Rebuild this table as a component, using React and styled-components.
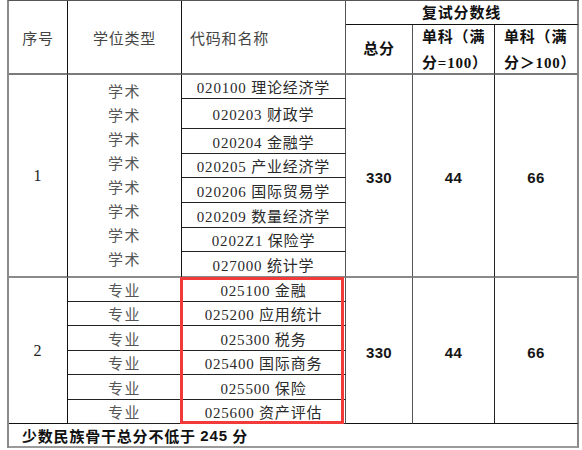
import React from 'react';
import styled, { createGlobalStyle } from 'styled-components';

const GlobalStyle = createGlobalStyle`
  html, body {
    margin: 0;
    padding: 0;
    background: #ffffff;
  }
  body {
    font-family: "Liberation Serif", "Noto Sans CJK SC", serif;
    color: #333;
  }
`;

// bordas verticais de cada coluna (pela coluna onde a célula termina)
const RIGHT = {
  1: '1px solid #111',
  2: '1px solid #111',
  3: '1px solid #555',
  4: '1px solid #555',
  5: '1px solid #222',
  6: '2px solid #8a8a8a',
};

const Table = styled.div`
  display: grid;
  grid-template-columns: 59px 114px 164px 67px 82px 84px;
  grid-template-rows: 24px 50px 24px 30px 25px 24px 25px 25px 24px 26px 24px 24px 25px 24px 25px 24px 24px;
  margin-left: 7px;
  width: max-content;
  border-top: 1px solid #555;
  border-left: 2px solid #8a8a8a;
  box-shadow: 0 1px 0 #dcdcdc;
`;

const Cell = styled.div`
  box-sizing: border-box;
  grid-column: ${p => p.$col};
  grid-row: ${p => p.$row};
  border-right: ${p => RIGHT[p.$end]};
  border-bottom: ${p => p.$bottom || '1px solid #222'};
  display: flex;
  align-items: center;
  justify-content: center;
  font-size: 15px;
  letter-spacing: 0.8px;
  white-space: nowrap;
`;

const HeadCell = styled(Cell)`
  color: #444;
  justify-content: ${p => (p.$left ? 'flex-start' : 'center')};
  padding-left: ${p => (p.$left ? '8px' : '0')};
`;

const BoldHead = styled(Cell)`
  font-weight: 700;
  color: #111;
  line-height: 26px;
  justify-content: ${p => (p.$left ? 'flex-start' : 'center')};
  padding-left: ${p => (p.$left ? '9px' : '0')};
  padding-top: ${p => (p.$left ? '2px' : '0')};
`;

const SeqCell = styled(Cell)`
  font-size: 16px;
  color: #222;
`;

const TypeStack = styled(Cell)`
  flex-direction: column;
  color: #555;
  line-height: 24px;
  letter-spacing: 1.5px;
  padding-top: 1px;
`;

const TypeCell = styled(Cell)`
  color: #555;
  letter-spacing: 1.5px;
`;

const MajorCell = styled(Cell)`
  color: #2a2a2a;
`;

const ScoreCell = styled(Cell)`
  font-family: "Liberation Sans", "Noto Sans CJK SC", sans-serif;
  font-weight: 700;
  font-size: 15px;
  letter-spacing: 0.3px;
  color: #151515;
  padding-top: 3px;
`;

const FooterCell = styled(Cell)`
  justify-content: flex-start;
  padding-left: 13px;
  font-weight: 700;
  color: #111;
  letter-spacing: 0.8px;
`;

const Num = styled.span`
  font-family: "Liberation Sans", sans-serif;
`;

// moldura vermelha sobre os cursos profissionais
const Highlight = styled.div`
  grid-column: 3;
  grid-row: 11 / 17;
  margin: -1px 2px 0 -2px;
  border: 3px solid #f23a3a;
  z-index: 1;
  pointer-events: none;
`;

const academic = [
  '020100 理论经济学',
  '020203 财政学',
  '020204 金融学',
  '020205 产业经济学',
  '020206 国际贸易学',
  '020209 数量经济学',
  '0202Z1 保险学',
  '027000 统计学',
];

const professional = [
  '025100 金融',
  '025200 应用统计',
  '025300 税务',
  '025400 国际商务',
  '025500 保险',
  '025600 资产评估',
];

const HEAD_LINE = '2px solid #7a7a7a';
const GROUP_LINE = '2px solid #8a8a8a';

export default function App() {
  const g1 = 3;
  const g2 = g1 + academic.length;
  const foot = g2 + professional.length;

  return (
    <>
      <GlobalStyle />
      <Table>
        <HeadCell $col="1" $row="1 / 3" $end={1} $bottom={HEAD_LINE}>序号</HeadCell>
        <HeadCell $col="2" $row="1 / 3" $end={2} $bottom={HEAD_LINE}>学位类型</HeadCell>
        <HeadCell $col="3" $row="1 / 3" $end={3} $bottom={HEAD_LINE} $left>代码和名称</HeadCell>
        <BoldHead $col="4 / 7" $row="1" $end={6} $bottom="1px solid #111">复试分数线</BoldHead>
        <BoldHead $col="4" $row="2" $end={4} $bottom={HEAD_LINE}>总分</BoldHead>
        <BoldHead $col="5" $row="2" $end={5} $bottom={HEAD_LINE} $left>
          <div>单科（满<br />分=100）</div>
        </BoldHead>
        <BoldHead $col="6" $row="2" $end={6} $bottom={HEAD_LINE} $left>
          <div>单科（满<br />分＞100）</div>
        </BoldHead>

        {/* 学术学位 */}
        <SeqCell $col="1" $row={`${g1} / ${g2}`} $end={1} $bottom={GROUP_LINE}>1</SeqCell>
        <TypeStack $col="2" $row={`${g1} / ${g2}`} $end={2} $bottom={GROUP_LINE}>
          {academic.map((_, i) => <span key={i}>学术</span>)}
        </TypeStack>
        {academic.map((m, i) => (
          <MajorCell
            key={m}
            $col="3"
            $row={`${g1 + i}`}
            $end={3}
            $bottom={i === academic.length - 1 ? GROUP_LINE : undefined}
          >
            {m}
          </MajorCell>
        ))}
        <ScoreCell $col="4" $row={`${g1} / ${g2}`} $end={4} $bottom={GROUP_LINE}>330</ScoreCell>
        <ScoreCell $col="5" $row={`${g1} / ${g2}`} $end={5} $bottom={GROUP_LINE}>44</ScoreCell>
        <ScoreCell $col="6" $row={`${g1} / ${g2}`} $end={6} $bottom={GROUP_LINE}>66</ScoreCell>

        {/* 专业学位 */}
        <SeqCell $col="1" $row={`${g2} / ${foot}`} $end={1} $bottom="1px solid #111">2</SeqCell>
        {professional.map((m, i) => (
          <React.Fragment key={m}>
            <TypeCell $col="2" $row={`${g2 + i}`} $end={2}>专业</TypeCell>
            <MajorCell $col="3" $row={`${g2 + i}`} $end={3}>{m}</MajorCell>
          </React.Fragment>
        ))}
        <ScoreCell $col="4" $row={`${g2} / ${foot}`} $end={4} $bottom="1px solid #111">330</ScoreCell>
        <ScoreCell $col="5" $row={`${g2} / ${foot}`} $end={5} $bottom="1px solid #111">44</ScoreCell>
        <ScoreCell $col="6" $row={`${g2} / ${foot}`} $end={6} $bottom="1px solid #111">66</ScoreCell>
        <Highlight />

        <FooterCell $col="1 / 7" $row={`${foot}`} $end={6} $bottom="2px solid #9a9a9a">
          少数民族骨干总分不低于&nbsp;<Num>245</Num>&nbsp;分
        </FooterCell>
      </Table>
    </>
  );
}
